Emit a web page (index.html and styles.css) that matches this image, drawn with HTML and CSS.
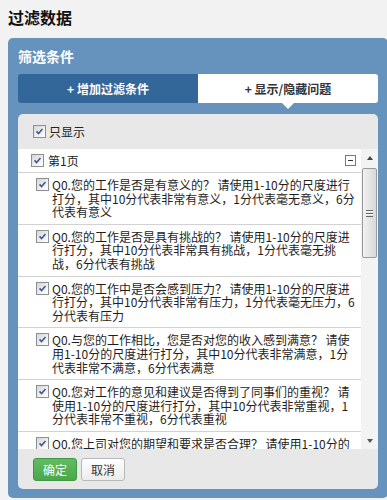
FILE: index.html
```html
<!DOCTYPE html>
<html lang="zh-CN">
<head>
<meta charset="utf-8">
<title>过滤数据</title>
<link rel="stylesheet" href="styles.css">
</head>
<body>
<h1 class="title">过滤数据</h1>
<div class="panel">
  <div class="panel-title">筛选条件</div>
  <div class="tabs">
    <div class="tab tab-add">+ 增加过滤条件</div>
    <div class="tab tab-show">+ 显示/隐藏问题</div>
  </div>
  <div class="box">
    <div class="only-row">
      <span class="cb"><svg viewBox="0 0 13 13"><path d="M3 6.3l2.4 2.6L10 3.6"/></svg></span>
      <span class="only-label">只显示</span>
    </div>
    <div class="list">
      <div class="list-body">
        <div class="page-row">
          <span class="cb"><svg viewBox="0 0 13 13"><path d="M3 6.3l2.4 2.6L10 3.6"/></svg></span>
          <span class="page-label">第1页</span>
          <span class="collapse"></span>
        </div>
        <div class="item">
          <span class="cb"><svg viewBox="0 0 13 13"><path d="M3 6.3l2.4 2.6L10 3.6"/></svg></span>
          <span class="item-text">Q0.您的工作是否是有意义的？ 请使用1-10分的尺度进行打分，其中10分代表非常有意义，1分代表毫无意义，6分代表有意义</span>
        </div>
        <div class="item">
          <span class="cb"><svg viewBox="0 0 13 13"><path d="M3 6.3l2.4 2.6L10 3.6"/></svg></span>
          <span class="item-text">Q0.您的工作是否是具有挑战的？ 请使用1-10分的尺度进行打分，其中10分代表非常具有挑战，1分代表毫无挑战，6分代表有挑战</span>
        </div>
        <div class="item">
          <span class="cb"><svg viewBox="0 0 13 13"><path d="M3 6.3l2.4 2.6L10 3.6"/></svg></span>
          <span class="item-text">Q0.您的工作中是否会感到压力？ 请使用1-10分的尺度进行打分，其中10分代表非常有压力，1分代表毫无压力，6分代表有压力</span>
        </div>
        <div class="item">
          <span class="cb"><svg viewBox="0 0 13 13"><path d="M3 6.3l2.4 2.6L10 3.6"/></svg></span>
          <span class="item-text">Q0.与您的工作相比，您是否对您的收入感到满意？ 请使用1-10分的尺度进行打分，其中10分代表非常满意，1分代表非常不满意，6分代表满意</span>
        </div>
        <div class="item">
          <span class="cb"><svg viewBox="0 0 13 13"><path d="M3 6.3l2.4 2.6L10 3.6"/></svg></span>
          <span class="item-text">Q0.您对工作的意见和建议是否得到了同事们的重视？ 请使用1-10分的尺度进行打分，其中10分代表非常重视，1分代表非常不重视，6分代表重视</span>
        </div>
        <div class="item">
          <span class="cb"><svg viewBox="0 0 13 13"><path d="M3 6.3l2.4 2.6L10 3.6"/></svg></span>
          <span class="item-text">Q0.您上司对您的期望和要求是否合理？ 请使用1-10分的尺度进行打分，其中10分代表非常合理，1分代表非常不合理，6分代表合理</span>
        </div>
      </div>
      <div class="scrollbar">
        <div class="sb-btn"><span class="arrow-up"></span></div>
        <div class="sb-track">
          <div class="sb-thumb"><span class="grip"></span></div>
        </div>
        <div class="sb-btn"><span class="arrow-down"></span></div>
      </div>
    </div>
    <div class="actions">
      <button class="btn btn-ok">确定</button>
      <button class="btn btn-cancel">取消</button>
    </div>
  </div>
</div>
</body>
</html>
```
FILE: styles.css
```css
html, body {
  margin: 0;
  padding: 0;
  overflow: hidden;
}
body {
  background: #f2f2f2;
  font-family: "Microsoft YaHei", "Noto Sans CJK SC", "Noto Sans", sans-serif;
  color: #222;
  width: 387px;
  height: 500px;
}
.title {
  margin: 0;
  padding: 6px 8px 0;
  font-size: 16px;
  font-weight: bold;
  line-height: 22px;
  color: #111;
}
.panel {
  margin: 10px 0 0 8px;
  width: 380px;
  box-sizing: border-box;
  background: #6593be;
  border-radius: 5px;
  padding: 10px 10px 9px;
}
.panel-title {
  color: #fff;
  font-size: 14px;
  font-weight: bold;
  line-height: 16px;
  margin-bottom: 10px;
}
.tabs {
  display: flex;
  height: 29px;
  border-radius: 3px;
}
.tab {
  flex: 1;
  text-align: center;
  font-size: 12px;
  font-weight: bold;
  line-height: 29px;
}
.tab-add {
  background: #336699;
  color: #fff;
  border-radius: 3px 0 0 3px;
}
.tab-show {
  background: #fff;
  color: #333;
  border-radius: 0 3px 3px 0;
  position: relative;
}
.tab-show::after {
  content: "";
  position: absolute;
  left: 50%;
  top: 29px;
  margin-left: -6px;
  border-left: 6px solid transparent;
  border-right: 6px solid transparent;
  border-top: 6px solid #fff;
}
.box {
  margin-top: 11px;
  background: #e8e8e8;
  border-radius: 5px;
  height: 375px;
  overflow: hidden;
}
.only-row {
  height: 35px;
  display: flex;
  align-items: center;
  padding-left: 15px;
  gap: 3px;
  font-size: 12px;
}
.cb {
  display: inline-block;
  flex: none;
  width: 11px;
  height: 11px;
  border: 1px solid #8e8f8f;
  background: linear-gradient(135deg, #d6d6d6 0%, #f4f4f4 70%, #fff 100%);
}
.cb svg {
  display: block;
  width: 11px;
  height: 11px;
}
.cb path {
  fill: none;
  stroke: #3e5a9c;
  stroke-width: 1.9;
}
.list {
  display: flex;
  height: 300px;
  background: #fff;
}
.list-body {
  flex: 1;
  overflow: hidden;
}
.page-row {
  height: 23px;
  border-bottom: 1px solid #d2d2d2;
  display: flex;
  align-items: center;
  padding: 0 5px 0 13px;
  gap: 4px;
  font-size: 12px;
}
.page-label {
  flex: 1;
}
.collapse {
  position: relative;
  width: 9px;
  height: 9px;
  border: 1px solid #7a7a7a;
  background: #fff;
}
.collapse::after {
  content: "";
  position: absolute;
  left: 2px;
  right: 2px;
  top: 4px;
  height: 1px;
  background: #333;
}
.item {
  display: flex;
  align-items: flex-start;
  gap: 3px;
  padding: 5px 0 5px 18px;
  border-bottom: 1px solid #d2d2d2;
}
.item-text {
  width: 304px;
  font-size: 12px;
  line-height: 13.6px;
  color: #1e1e1e;
}
.scrollbar {
  width: 17px;
  flex: none;
  display: flex;
  flex-direction: column;
  background: #f3f3f3;
}
.sb-btn {
  height: 17px;
  display: flex;
  align-items: center;
  justify-content: center;
}
.arrow-up {
  border-left: 3.5px solid transparent;
  border-right: 3.5px solid transparent;
  border-bottom: 4px solid #444;
}
.arrow-down {
  border-left: 3.5px solid transparent;
  border-right: 3.5px solid transparent;
  border-top: 4px solid #555;
}
.sb-track {
  flex: 1;
  padding: 2px 1px 0;
}
.sb-thumb {
  height: 88px;
  border: 1px solid #9a9a9a;
  border-radius: 2px;
  background: linear-gradient(to right, #f2f2f2, #e2e2e2 60%, #d8d8d8);
  display: flex;
  align-items: center;
  justify-content: center;
}
.grip {
  width: 7px;
  height: 7px;
  background: repeating-linear-gradient(to bottom, #666 0, #666 1px, #fafafa 1px, #fafafa 2px, transparent 2px, transparent 3px);
}
.actions {
  height: 40px;
  box-sizing: border-box;
  padding: 9px 15px 0;
  display: flex;
  gap: 4px;
  align-items: flex-start;
}
.btn {
  height: 23px;
  padding: 0 9px;
  font-family: inherit;
  font-size: 12px;
  line-height: 21px;
  border-radius: 3px;
  margin: 0;
}
.btn-ok {
  color: #fff;
  background: linear-gradient(to bottom, #62bb62, #4aa84a);
  border: 1px solid #419841;
}
.btn-cancel {
  color: #333;
  background: linear-gradient(to bottom, #ffffff, #ececec);
  border: 1px solid #b8b8b8;
}
```
